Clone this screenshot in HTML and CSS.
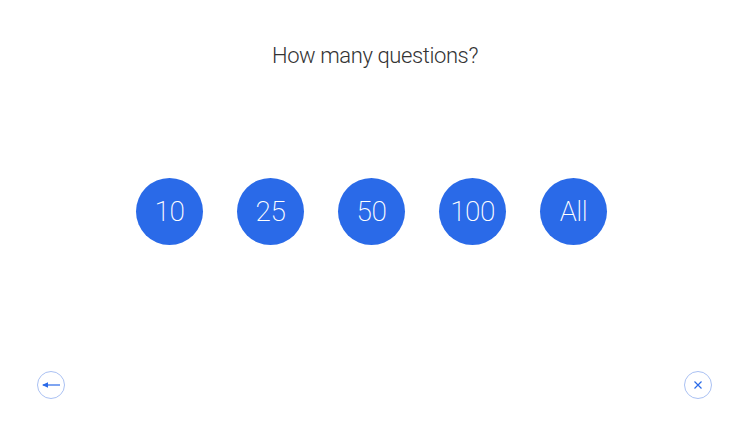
FILE: index.html
```html
<!DOCTYPE html>
<html>
<head>
<meta charset="utf-8">
<link rel="stylesheet" href="styles.css">
</head>
<body>
<div class="screen">
  <h1 class="title">How many questions?</h1>
  <div class="choices">
    <button class="choice">10</button>
    <button class="choice">25</button>
    <button class="choice">50</button>
    <button class="choice">100</button>
    <button class="choice">All</button>
  </div>
  <div class="footer">
    <button class="round-btn" aria-label="Back">
      <svg width="18" height="8" viewBox="0 0 18 8"><path d="M1 4H18" stroke="#2a6ae8" stroke-width="1.2" fill="none"/><path d="M0 4L6 1.2V6.8Z" fill="#2a6ae8"/></svg>
    </button>
    <button class="round-btn" aria-label="Close">
      <svg width="8" height="8" viewBox="0 0 8 8"><path d="M0.5 0.5L7.5 7.5M7.5 0.5L0.5 7.5" stroke="#2a6ae8" stroke-width="1.2" fill="none"/></svg>
    </button>
  </div>
</div>
</body>
</html>
```
FILE: styles.css
```css
html, body {
  margin: 0;
  padding: 0;
  background: #ffffff;
}
.screen {
  width: 750px;
  height: 422px;
  display: flex;
  flex-direction: column;
  font-family: Roboto, "Liberation Sans", sans-serif;
}
.title {
  margin: 0;
  padding-top: 42px;
  font-size: 22px;
  line-height: 28px;
  font-weight: 300;
  letter-spacing: -0.4px;
  color: #333333;
  text-align: center;
}
.choices {
  margin-top: 108px;
  display: flex;
  justify-content: center;
  gap: 34px;
  padding-right: 7px;
}
.choice {
  width: 67px;
  height: 67px;
  border-radius: 50%;
  border: none;
  padding: 0;
  background: #2a6ae8;
  color: #ffffff;
  font-family: Roboto, "Liberation Sans", sans-serif;
  font-weight: 200;
  font-size: 28px;
  letter-spacing: -0.5px;
  display: flex;
  align-items: center;
  justify-content: center;
}
.footer {
  margin-top: 126px;
  display: flex;
  justify-content: space-between;
  padding: 0 38px 0 37px;
}
.round-btn {
  width: 28px;
  height: 28px;
  box-sizing: border-box;
  border-radius: 50%;
  border: 1px solid #aac1f3;
  background: #ffffff;
  padding: 0;
  display: flex;
  align-items: center;
  justify-content: center;
}
.round-btn svg {
  display: block;
}
```
